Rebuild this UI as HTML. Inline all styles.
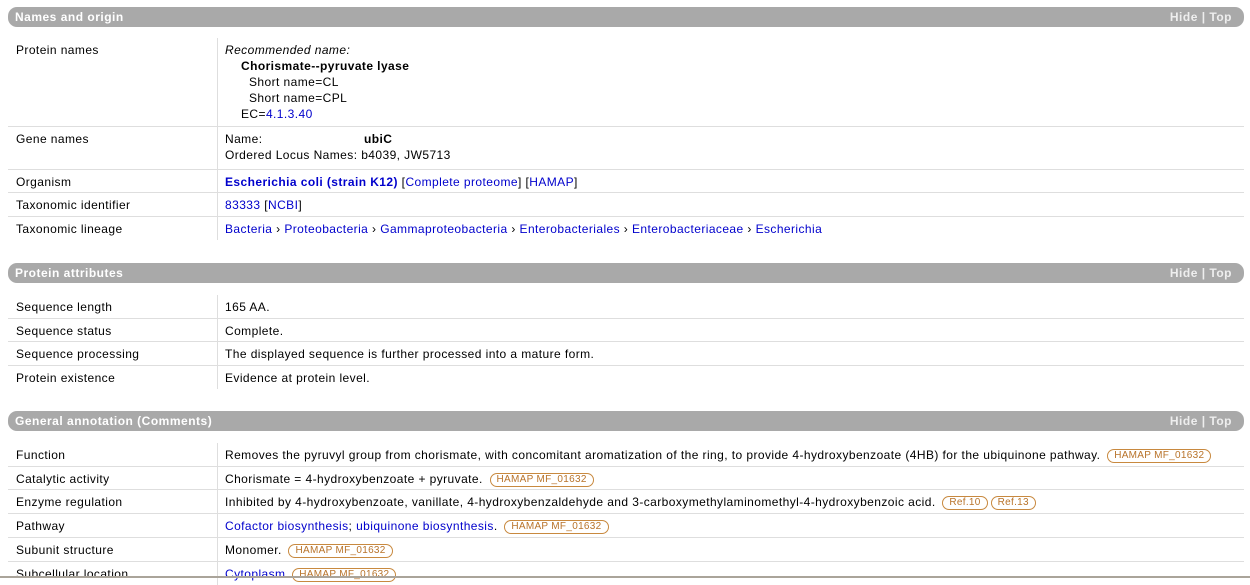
<!DOCTYPE html>
<html><head><meta charset="utf-8"><style>
body{margin:0;width:1250px;height:578px;overflow:hidden;background:#fff;font-family:"Liberation Sans",Tahoma,sans-serif;font-size:12px;letter-spacing:0.42px;color:#000;position:relative}
.h{position:absolute;left:8px;width:1236px;height:20px;background:#a9a9a9;border-radius:9px;color:#fff;font-weight:bold;line-height:20px;letter-spacing:0.5px}
.h .t{position:absolute;left:7px}
.h .n{position:absolute;right:12px;color:#eee}
.r{position:absolute;left:8px;width:1236px;border-bottom:1px solid #dedede}
.r.last{border-bottom:none}
.l{position:absolute;left:0;top:0;bottom:0;width:210px;padding-left:8px;border-right:1px solid #dedede;padding-top:4px;line-height:16px;box-sizing:border-box}
.v{position:absolute;left:217px;top:4px;line-height:16px;white-space:nowrap}
a{color:#00c;text-decoration:none}
.b{display:inline-block;border:1px solid #c8893f;color:#b8732a;border-radius:8px;font-size:10px;letter-spacing:0.3px;line-height:12px;padding:0 6px;margin-left:3px;vertical-align:1px}
</style></head><body>
<div class="h" style="top:7px"><span class="t">Names and origin</span><span class="n">Hide | Top</span></div>
<div class="r" style="top:38px;height:88px"><div class="l">Protein names</div><div class="v"><i>Recommended name:</i><br><b style="margin-left:16px">Chorismate--pyruvate lyase</b><br><span style="margin-left:24px">Short name=CL</span><br><span style="margin-left:24px">Short name=CPL</span><br><span style="margin-left:16px">EC=<a>4.1.3.40</a></span></div></div>
<div class="r" style="top:127px;height:42px"><div class="l">Gene names</div><div class="v"><span style="display:inline-block;width:139px">Name:</span><b>ubiC</b><br>Ordered Locus Names: b4039, JW5713</div></div>
<div class="r" style="top:170px;height:22px"><div class="l">Organism</div><div class="v"><a><b>Escherichia coli (strain K12)</b></a> [<a>Complete proteome</a>] [<a>HAMAP</a>]</div></div>
<div class="r" style="top:193px;height:23px"><div class="l">Taxonomic identifier</div><div class="v"><a>83333</a> [<a>NCBI</a>]</div></div>
<div class="r last" style="top:217px;height:23px"><div class="l">Taxonomic lineage</div><div class="v"><a>Bacteria</a> › <a>Proteobacteria</a> › <a>Gammaproteobacteria</a> › <a>Enterobacteriales</a> › <a>Enterobacteriaceae</a> › <a>Escherichia</a></div></div>

<div class="h" style="top:263px"><span class="t">Protein attributes</span><span class="n">Hide | Top</span></div>
<div class="r" style="top:295px;height:23px"><div class="l">Sequence length</div><div class="v">165 AA.</div></div>
<div class="r" style="top:319px;height:22px"><div class="l">Sequence status</div><div class="v">Complete.</div></div>
<div class="r" style="top:342px;height:23px"><div class="l">Sequence processing</div><div class="v">The displayed sequence is further processed into a mature form.</div></div>
<div class="r last" style="top:366px;height:23px"><div class="l">Protein existence</div><div class="v">Evidence at protein level.</div></div>

<div class="h" style="top:411px"><span class="t">General annotation (Comments)</span><span class="n">Hide | Top</span></div>
<div class="r" style="top:443px;height:23px"><div class="l">Function</div><div class="v">Removes the pyruvyl group from chorismate, with concomitant aromatization of the ring, to provide 4-hydroxybenzoate (4HB) for the ubiquinone pathway. <span class="b">HAMAP MF_01632</span></div></div>
<div class="r" style="top:467px;height:22px"><div class="l">Catalytic activity</div><div class="v">Chorismate = 4-hydroxybenzoate + pyruvate. <span class="b">HAMAP MF_01632</span></div></div>
<div class="r" style="top:490px;height:23px"><div class="l">Enzyme regulation</div><div class="v">Inhibited by 4-hydroxybenzoate, vanillate, 4-hydroxybenzaldehyde and 3-carboxymethylaminomethyl-4-hydroxybenzoic acid. <span class="b">Ref.10</span><span class="b">Ref.13</span></div></div>
<div class="r" style="top:514px;height:23px"><div class="l">Pathway</div><div class="v"><a>Cofactor biosynthesis</a>; <a>ubiquinone biosynthesis</a>. <span class="b">HAMAP MF_01632</span></div></div>
<div class="r" style="top:538px;height:23px"><div class="l">Subunit structure</div><div class="v">Monomer. <span class="b">HAMAP MF_01632</span></div></div>
<div class="r last" style="top:562px;height:23px"><div class="l">Subcellular location</div><div class="v"><a>Cytoplasm</a> <span class="b">HAMAP MF_01632</span></div></div>
<div style="position:absolute;left:0;top:576px;width:1250px;height:2px;background:#aaa49a"></div>
</body></html>
